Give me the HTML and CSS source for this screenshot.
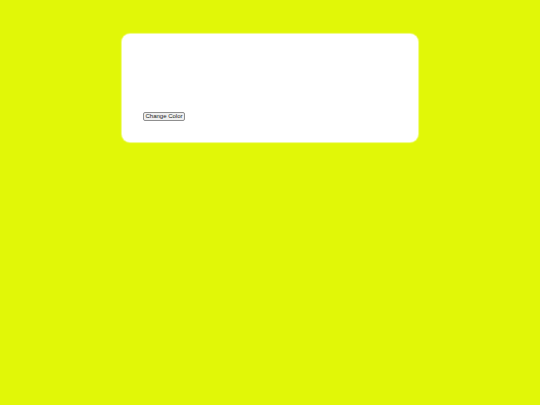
FILE: index.html
```html
<!DOCTYPE html>
<html>
<head>
<meta charset="utf-8">
<link rel="stylesheet" href="styles.css">
</head>
<body>
<div class="card">
  <button class="btn">Change Color</button>
</div>
</body>
</html>
```
FILE: styles.css
```css
html, body {
  margin: 0;
  padding: 0;
  height: 100%;
}
body {
  background: #e1f707;
  font-family: "Liberation Sans", Arial, sans-serif;
  padding-top: 34px;
  box-sizing: border-box;
}
.card {
  width: 296px;
  height: 108px;
  margin: 0 auto;
  background: #ffffff;
  border-radius: 8px;
  box-shadow: 0 0 1px 1px rgba(255,255,255,0.6);
  box-sizing: border-box;
  padding: 78px 0 0 21px;
}
.btn {
  display: block;
  width: 42px;
  font-family: "Liberation Sans", Arial, sans-serif;
  font-size: 6px;
  line-height: 7px;
  height: 9px;
  padding: 0;
  margin: 0;
  text-align: center;
  white-space: nowrap;
  color: #222;
  background: #efefef;
  border: 1px solid #8f8f8f;
  border-radius: 2px;
  box-sizing: border-box;
}
```
